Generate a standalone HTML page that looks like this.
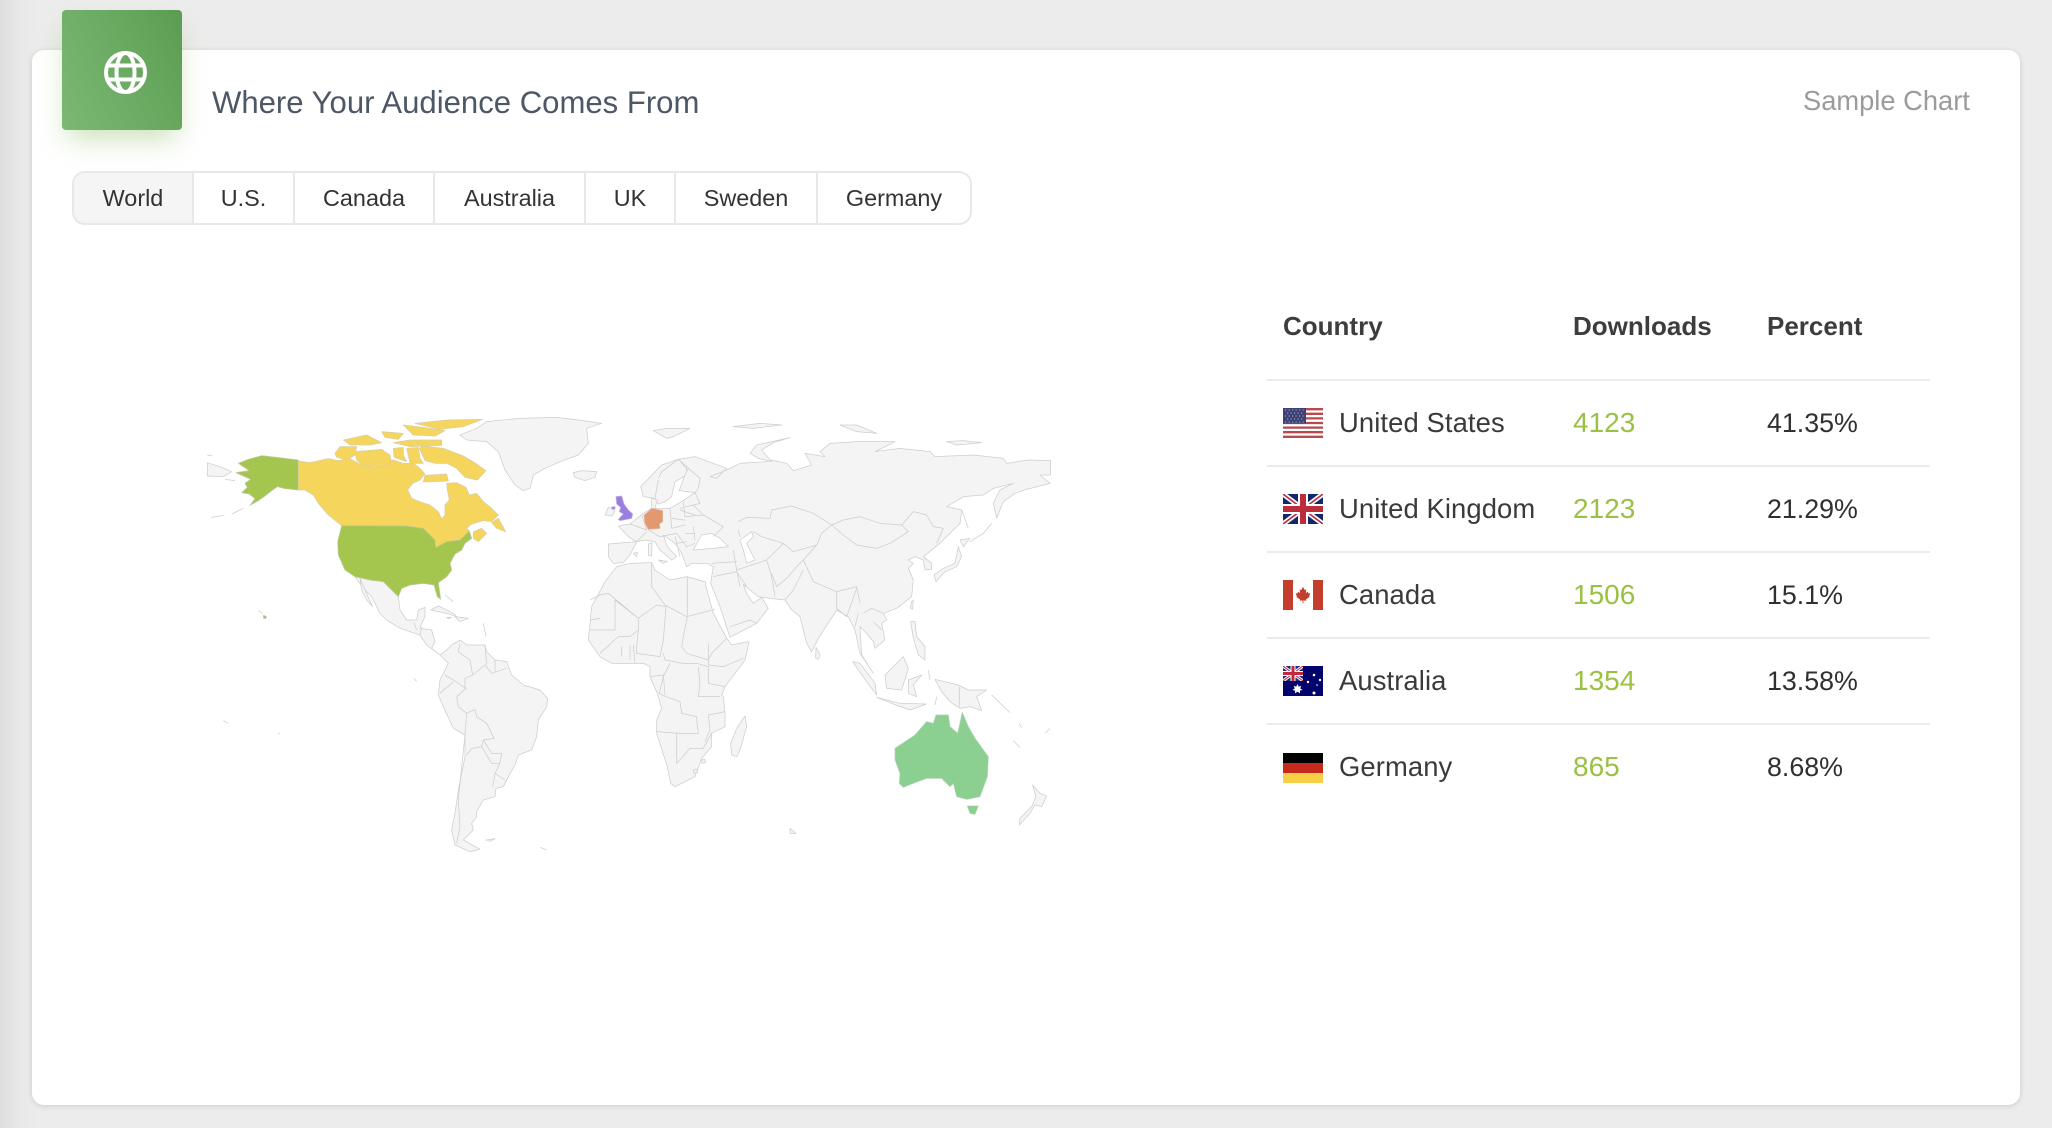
<!DOCTYPE html>
<html lang="en"><head><meta charset="utf-8"><title>Where Your Audience Comes From</title>
<style>
*{box-sizing:border-box}
html,body{margin:0;padding:0;width:2052px;height:1128px;overflow:hidden}
body{background:linear-gradient(90deg,#dedede 0,#e8e8e8 20px,#ececec 40px);font-family:"Liberation Sans",sans-serif;position:relative}
.card{position:absolute;left:32px;top:50px;width:1988px;height:1055px;background:#fff;border-radius:12px;box-shadow:0 1px 6px rgba(0,0,0,.14)}
.badge{position:absolute;left:62px;top:10px;width:120px;height:120px;border-radius:4px;background:linear-gradient(65deg,#7cba74,#5c9c52);box-shadow:0 14px 26px -6px rgba(130,180,80,.42)}
.t{position:absolute;white-space:nowrap;line-height:1}
.btns{position:absolute;left:72px;top:171px;width:900px;height:54px;border:2px solid #e8e8e8;border-radius:13px;overflow:hidden;background:#fff}
.b{position:absolute;top:0;height:50px;border-right:2px solid #e8e8e8;text-align:center;font-size:23.4px;line-height:50px;color:#333}
.line{position:absolute;left:1267px;width:663px;height:2px;background:#ebebeb}
.h{font-size:26px;font-weight:bold;color:#3d3d3d;top:313px}
.r{font-size:27.4px;color:#3a3a3a;letter-spacing:.1px}
.n{font-size:28px;color:#9ac144;left:1573px}
.p{font-size:26.8px;color:#303030;left:1767px}
.f{position:absolute;left:1283px;width:40px;height:30px;display:block}
svg.map{position:absolute;left:0;top:0}
svg.map path{stroke:#cdcdcd;stroke-width:2.2;stroke-linejoin:round;fill:#f4f4f4}
svg.map path.l{fill:none}
svg.map path.w{fill:#fff}
svg.map path.us{fill:#a5c64e;stroke:#bcc9a0}
svg.map path.ca{fill:#f6d55c;stroke:#d6cfa8}
svg.map path.au{fill:#8bcf91;stroke:#b3d3b6}
svg.map path.de{fill:#e3996f;stroke:#dcb9a4}
svg.map path.uk{fill:#9a7ee0;stroke:#bcb0dc}
</style></head><body>
<div class="card"></div>
<div class="badge"></div>
<svg style="position:absolute;left:102px;top:49px" width="47" height="47" viewBox="0 0 47 47" fill="none" stroke="#fff" stroke-width="4">
<circle cx="23.5" cy="23.5" r="19.5"/><ellipse cx="23.5" cy="23.5" rx="9" ry="19.5"/><path d="M6 16.5H41M6 30.5H41"/></svg>
<div class="t" style="left:212px;top:87px;font-size:31.1px;color:#4d5766">Where Your Audience Comes From</div>
<div class="t" style="left:1803px;top:87px;font-size:27.3px;color:#9b9b9b">Sample Chart</div>

<div class="btns">
<div class="b" style="left:0;width:120px;background:#f5f5f5">World</div>
<div class="b" style="left:120px;width:101px">U.S.</div>
<div class="b" style="left:221px;width:140px">Canada</div>
<div class="b" style="left:361px;width:151px">Australia</div>
<div class="b" style="left:512px;width:90px">UK</div>
<div class="b" style="left:602px;width:142px">Sweden</div>
<div class="b" style="left:744px;width:152px;border-right:0">Germany</div>
</div>

<svg class="map" width="2052" height="1128" viewBox="0 0 2052 1128">
<!-- North America, Greenland -->
<g transform="translate(190 400) scale(.33333)">
<path d="M810,105 L860,85 L890,65 L990,55 L1100,52 L1165,60 L1235,70 L1190,85 L1195,130 L1165,165 L1110,185 L1065,205 L1030,225 L1020,265 L1000,272 L975,255 L945,210 L925,155 L890,125 L830,120 Z"/>
<path d="M1150,218 L1175,212 L1220,215 L1215,232 L1185,242 L1155,232 Z"/>
<path d="M52,188 L90,200 L125,215 L100,230 L52,228 Z"/>
<path class="l" d="M65,352 L100,346 M125,342 L160,325 M105,238 L135,242 M52,165 L68,168"/>
<path d="M495,530 L540,540 L580,545 L605,570 L625,590 L630,630 L650,660 L680,660 L685,630 L705,622 L705,650 L695,670 L690,685 L725,690 L735,725 L725,745 L750,765 L730,750 L710,735 L690,705 L660,695 L630,685 L590,660 L570,640 L545,590 L520,565 Z"/>
<path d="M510,535 L525,570 L548,620 L530,600 L515,570 Z"/>
<path d="M722,630 L745,618 L790,640 L800,650 L770,640 Z"/>
<path d="M795,650 L835,655 L810,665 Z"/>
<path d="M770,652 L785,652 L775,656 Z"/>
<path class="l" d="M672,668 L680,690 M695,682 L690,705 M765,585 L790,605 M880,670 L888,710"/>
<path class="us" d="M145,190 L175,178 L215,167 L260,172 L325,180 L325,270 L285,266 L262,260 L245,272 L225,288 L205,302 L180,316 L195,296 L178,282 L155,278 L172,262 L165,250 L182,238 L160,228 L138,218 L178,212 L160,200 Z"/>
<path class="ca" d="M325,183 L360,188 L415,176 L445,182 L480,176 L515,195 L555,205 L580,185 L610,180 L640,190 L670,190 L690,205 L705,222 L690,240 L668,250 L653,270 L665,295 L690,305 L720,315 L745,335 L755,357 L765,345 L765,315 L778,300 L772,270 L770,250 L800,248 L828,262 L838,285 L860,280 L880,305 L905,325 L925,345 L905,365 L880,362 L845,372 L830,385 L838,393 L810,420 L770,425 L737,443 L735,420 L700,385 L650,378 L455,377 L440,365 L415,345 L385,310 L370,285 L345,270 L325,270 Z"/>
<path class="ca" d="M850,395 L875,385 L890,400 L865,425 L850,415 Z"/>
<path class="ca" d="M905,368 L925,355 L947,395 L920,385 Z"/>
<path class="ca" d="M688,145 L700,138 L760,145 L820,168 L860,192 L888,212 L862,240 L825,232 L800,205 L770,190 L735,190 L705,182 Z"/>
<path class="ca" d="M705,226 L770,222 L775,243 L700,246 Z"/>
<path class="ca" d="M495,155 L575,148 L600,165 L605,190 L570,203 L520,198 L500,180 Z"/>
<path class="ca" d="M435,160 L450,140 L500,140 L495,165 L470,180 L440,172 Z"/>
<path class="ca" d="M460,120 L530,105 L575,128 L540,135 L480,135 Z"/>
<path class="ca" d="M575,95 L640,100 L625,118 L585,112 Z"/>
<path class="ca" d="M610,128 L660,120 L755,120 L755,136 L660,140 Z"/>
<path class="ca" d="M640,75 L700,82 L765,92 L735,108 L670,105 Z"/>
<path class="ca" d="M675,70 L770,60 L878,58 L820,80 L750,88 Z"/>
<path class="ca" d="M610,145 L640,142 L640,165 L650,185 L612,172 Z"/>
<path class="ca" d="M650,145 L685,142 L690,175 L700,190 L660,190 Z"/>
<path class="us" d="M455,377 L650,378 L700,385 L735,420 L737,443 L770,425 L810,420 L838,393 L845,415 L825,430 L815,450 L795,462 L780,490 L785,510 L770,530 L745,548 L752,598 L742,590 L732,555 L700,550 L660,555 L635,565 L625,590 L605,570 L580,545 L540,540 L495,530 L465,510 L445,465 L443,425 Z"/>
<path class="us" d="M220,646 L229,649 L227,656 L221,655 Z"/>
<path class="l" d="M205,632 L218,640"/>
</g>
<!-- South America -->
<g transform="translate(190 600) scale(.33333)">
<path d="M750,165 L770,150 L785,135 L810,120 L830,135 L885,135 L890,155 L915,180 L950,185 L965,225 L1000,255 L1050,270 L1073,295 L1070,320 L1045,360 L1040,410 L1025,450 L985,465 L975,495 L955,530 L940,560 L918,565 L915,590 L880,600 L860,635 L860,650 L845,670 L850,690 L820,720 L870,748 L840,755 L795,735 L785,690 L795,640 L805,570 L825,470 L825,405 L790,385 L760,320 L745,285 L750,240 L765,210 L775,190 Z"/>
<path class="l" d="M810,130 L805,155 L840,180 L848,225 L885,195 L905,220 L950,205 M885,135 L890,195 M915,180 L915,215 M765,225 L790,240 L820,260 L828,265 L800,290 L805,320 L830,340 L825,405 M750,280 L790,245 M830,340 L855,328 L860,350 L890,370 L912,415 L880,420 L875,440 L845,445 L830,465 M880,420 L905,460 L935,460 L930,490 L905,490 L875,440 M930,490 L915,520 L945,540 M915,520 L908,560 M825,405 L815,500 L805,600 L810,680 L800,730 M848,225 L825,235 L825,265"/>
<path d="M888,720 L915,716 L900,724 Z"/>
<path class="l" d="M1050,742 L1070,750 M100,362 L115,370 M672,235 L680,245 M265,400 L270,401"/>
</g>
<!-- Eurasia, Africa, Oceania -->
<g transform="translate(580 400) scale(.33333)">
<path d="M110,500 L150,490 L215,488 L225,510 L270,540 L320,530 L375,545 L378,560 L400,640 L440,715 L455,735 L507,725 L495,780 L435,860 L425,885 L430,890 L435,935 L435,980 L395,1000 L395,1040 L365,1075 L345,1130 L285,1160 L272,1150 L262,1100 L230,1000 L230,960 L245,925 L232,880 L210,830 L210,800 L190,790 L130,790 L95,790 L60,770 L25,720 L35,620 L75,545 Z"/>
<path class="l" d="M30,690 L105,690 L105,600 L175,655 L230,615 L258,620 M85,580 L175,655 L175,690 L150,710 L115,710 M215,490 L215,560 L255,615 L320,650 L405,628 M322,530 L322,650 M322,650 L310,710 L305,740 L320,760 L385,780 L395,760 L440,715 M175,690 L170,740 L170,760 L240,770 L250,720 L258,620 M250,760 L255,780 L310,790 L350,790 L385,800 M385,730 L385,795 L430,800 L490,775 M270,790 L250,830 L238,880 L258,890 L300,905 L305,940 L350,950 L350,960 L355,1000 L300,1000 L230,995 M355,800 L360,850 L355,890 L420,890 M385,800 L385,850 L435,860 M435,935 L385,945 L390,990 L375,1025 M290,1000 L290,1090 L330,1045 L370,1045 L395,1000 M60,760 L115,710 M125,770 L125,740 M150,735 L150,780 M160,735 L165,790 M30,660 L60,655 M30,600 L60,585 L85,580 M210,830 L250,825 L255,885"/>
<path d="M495,948 L500,980 L480,1050 L470,1070 L455,1065 L452,1030 L470,985 Z"/>
<path d="M340,1110 L352,1108 L352,1118 L342,1120 Z"/>
<path d="M365,1080 L375,1078 L376,1088 L366,1090 Z"/>
<!-- Iberia -->
<path d="M85,432 L135,428 L170,425 L150,465 L130,488 L100,490 L85,470 Z"/>
<!-- Scandinavia -->
<path d="M182,260 L245,195 L295,178 L320,205 L320,225 L285,245 L275,290 L255,305 L235,312 L225,295 L190,290 Z"/>
<path class="l" d="M235,235 L245,215 L295,178 M225,295 L235,240"/>
<path d="M215,295 L232,300 L225,325 L215,325 Z"/>
<!-- Main Eurasia -->
<path d="M115,378 L150,372 L190,340 L215,325 L270,325 L300,308 L345,278 L298,272 L315,225 L325,205 L295,178 L345,170 L400,190 L440,205 L410,235 L390,230 L440,210 L480,190 L560,185 L575,180 L620,190 L640,212 L695,195 L675,160 L735,170 L720,155 L750,130 L830,125 L945,125 L885,155 L960,145 L1050,155 L1065,170 L1180,165 L1270,175 L1280,190 L1345,180 L1412,182 L1412,225 L1380,225 L1410,250 L1340,268 L1305,280 L1270,305 L1250,355 L1240,310 L1260,270 L1300,250 L1240,265 L1210,285 L1150,290 L1100,320 L1145,330 L1140,370 L1085,425 L1030,470 L1055,490 L1055,508 L1035,510 L1030,480 L1005,470 L985,480 L1000,490 L985,505 L1000,540 L995,590 L950,625 L910,640 L920,660 L905,670 L915,720 L885,745 L880,725 L860,700 L840,680 L845,765 L880,820 L840,760 L825,690 L805,650 L770,630 L715,715 L695,755 L680,730 L660,650 L635,630 L615,600 L570,595 L535,590 L510,570 L490,553 L500,580 L520,610 L545,592 L565,625 L530,670 L450,712 L420,620 L392,550 L395,530 L400,500 L380,490 L335,490 L320,500 L305,460 L285,430 L250,405 L262,440 L290,470 L275,480 L240,450 L225,425 L195,420 L170,425 L145,410 Z"/>
<path class="w" d="M345,440 L365,405 L395,400 L420,415 L445,440 L400,445 L340,450 Z"/>
<path class="w" d="M480,420 L515,395 L520,410 L500,430 L525,480 L500,490 L490,450 Z"/>
<path class="l" d="M475,365 L500,352 L570,355 L575,330 L635,318 L700,340 L755,375 M475,390 L480,410 M520,395 L545,410 L610,430 L640,455 L710,435 L725,400 L755,375 L790,360 L840,350 L900,370 L965,375 L1000,335 L1040,345 L1060,380 L1090,385 L1070,430 M755,375 L790,405 L830,435 L890,445 L930,430 L985,395 L965,375 M710,435 L670,480 L700,545 L770,575 L830,560 L840,610 M460,450 L470,510 L560,480 L575,530 L585,590 M575,520 L590,560 L620,535 L650,500 L670,480 M615,600 L640,570 L670,510 M400,530 L470,515 L500,560 M395,490 L470,485 M450,680 L510,660 L530,670 M770,575 L770,625 L800,650 L830,565 M835,640 L825,680 M850,640 L875,625 L910,640 M880,665 L905,690 M185,345 L200,390 L150,372 M270,325 L275,385 M310,305 L315,350 L370,345 L430,380 L400,410 M340,315 L370,345 M275,385 L315,375 M205,390 L240,410 L290,400 L320,440 L345,430 M340,380 L345,420 M285,410 L300,470 M325,205 L360,235 L355,265 L345,278 M345,278 L360,310 L340,315 L300,325 M1030,470 L1040,480 M560,480 L610,430 M470,510 L480,560 M300,330 L345,345 M275,355 L315,360 M315,400 L345,400 M290,430 L320,425 M170,425 L200,395"/>
<!-- Germany, UK -->
<path class="de" d="M192,345 L205,335 L215,325 L248,332 L248,365 L238,372 L240,385 L205,388 L195,370 Z"/>
<path class="uk" d="M108,290 L125,288 L132,312 L145,330 L158,342 L155,355 L120,362 L115,358 L130,342 L118,335 L122,322 L110,312 Z"/>
<path d="M75,345 L85,322 L100,328 L105,335 L95,348 Z"/>
<path class="uk" d="M95,321 L105,320 L105,328 L96,327 Z"/>
<!-- Med islands -->
<path d="M205,432 L216,428 L215,468 L206,466 Z"/>
<path d="M160,460 L172,457 L170,470 Z"/>
<path d="M235,480 L262,484 L250,490 Z"/>
<!-- Arctic -->
<path d="M220,92 L260,85 L330,85 L280,110 L260,115 Z"/>
<path d="M460,80 L540,70 L605,75 L520,85 Z"/>
<path d="M510,160 L530,135 L630,113 L580,128 L545,150 L575,185 L535,175 Z"/>
<path d="M780,75 L830,75 L890,100 L830,95 Z"/>
<path d="M1100,125 L1150,122 L1205,128 L1130,135 Z"/>
<!-- Japan etc -->
<path d="M1062,525 L1090,505 L1125,490 L1135,440 L1145,470 L1130,500 L1095,515 L1068,545 Z"/>
<path d="M1140,420 L1170,415 L1150,440 Z"/>
<path class="l" d="M1145,330 L1165,385 M1235,370 L1210,400 L1170,425"/>
<path d="M995,605 L1000,600 L998,628 L991,625 Z"/>
<path d="M708,742 L720,765 L715,778 L707,775 Z"/>
<!-- SE Asia -->
<path d="M992,665 L1005,665 L1010,710 L1035,740 L1035,780 L1015,765 L1000,715 Z"/>
<path d="M915,825 L970,770 L985,805 L965,870 L920,865 Z"/>
<path d="M818,785 L840,790 L885,850 L890,885 L860,845 Z"/>
<path d="M890,892 L960,910 L1040,912 L990,930 L940,912 Z"/>
<path d="M985,840 L1025,825 L1000,855 L1010,890 L985,880 Z"/>
<path d="M1065,838 L1135,855 L1165,870 L1220,870 L1190,890 L1205,932 L1170,920 L1140,925 L1110,905 L1085,875 Z"/>
<path class="l" d="M1138,860 L1138,920 M1235,885 L1290,938 M1318,970 L1325,985 M1300,1022 L1320,1042 M1395,1000 L1410,985 M1045,810 L1050,840 M1070,890 L1065,915"/>
<!-- Australia -->
<path class="au" d="M945,1045 L1005,1005 L1040,965 L1060,970 L1068,945 L1105,945 L1110,980 L1133,1000 L1147,937 L1165,980 L1185,1015 L1225,1070 L1222,1130 L1200,1190 L1160,1198 L1130,1190 L1120,1150 L1110,1160 L1085,1135 L1040,1135 L1000,1150 L970,1162 L958,1150 L960,1120 L945,1080 Z"/>
<path class="au" d="M1162,1218 L1195,1218 L1185,1243 L1170,1240 Z"/>
<path d="M1358,1155 L1380,1180 L1400,1188 L1385,1220 L1365,1215 L1350,1240 L1318,1275 L1320,1255 L1355,1220 L1368,1190 Z"/>
<path d="M630,1285 L648,1300 L630,1300 Z"/>
</g>
</svg>

<div class="t h" style="left:1283px">Country</div>
<div class="t h" style="left:1573px">Downloads</div>
<div class="t h" style="left:1767px">Percent</div>
<div class="line" style="top:379px"></div>
<div class="line" style="top:465px"></div>
<div class="line" style="top:551px"></div>
<div class="line" style="top:637px"></div>
<div class="line" style="top:723px"></div>

<svg class="f" style="top:408px" viewBox="0 0 40 30">
<rect width="40" height="30" fill="#fff"/>
<path d="M0 1.2H40M0 5.8H40M0 10.4H40M0 15H40M0 19.6H40M0 24.2H40M0 28.8H40" stroke="#b64a4e" stroke-width="2.3"/>
<rect width="23" height="15.5" fill="#3d4176"/>
<path d="M2 2H21M4 5H21M2 8H21M4 11H21M2 14H21" stroke="#aab" stroke-width="1.1" stroke-dasharray="1.2 2.3"/>
</svg>
<svg class="f" style="top:494px" viewBox="0 0 40 30">
<rect width="40" height="30" fill="#12286b"/>
<path d="M0 0L40 30M40 0L0 30" stroke="#fff" stroke-width="5"/>
<path d="M0 0L40 30M40 0L0 30" stroke="#c0283c" stroke-width="1.6"/>
<path d="M20 0V30M0 15H40" stroke="#fff" stroke-width="10"/>
<path d="M20 0V30M0 15H40" stroke="#bd2c3c" stroke-width="6"/>
</svg>
<svg class="f" style="top:580px" viewBox="0 0 40 30">
<rect width="40" height="30" fill="#fff"/>
<rect width="10" height="30" fill="#c33e2c"/><rect x="30" width="10" height="30" fill="#c33e2c"/>
<path transform="translate(20 15) scale(.82) translate(-20 -15)" d="M20 5L22 9L24 8L23.5 12.5L26 11L26.7 13L29 13L27.5 16.5L28 17.5L23.5 20.5L24 22L20.5 21.5V25H19.5V21.5L16 22L16.5 20.5L12 17.5L12.5 16.5L11 13L13.3 13L14 11L16.5 12.5L16 8L18 9Z" fill="#c33e2c"/>
</svg>
<svg class="f" style="top:666px" viewBox="0 0 40 30">
<rect width="40" height="30" fill="#03036e"/>
<svg x="0" y="0" width="20" height="15" viewBox="0 0 40 30">
<rect width="40" height="30" fill="#1f2a80"/>
<path d="M0 0L40 30M40 0L0 30" stroke="#fff" stroke-width="6"/>
<path d="M0 0L40 30M40 0L0 30" stroke="#c0283c" stroke-width="2"/>
<path d="M20 0V30M0 15H40" stroke="#fff" stroke-width="10"/>
<path d="M20 0V30M0 15H40" stroke="#c0283c" stroke-width="6"/>
</svg>
<g fill="#fff"><path d="M14.5 18L15.7 20.6L18.3 20L17.2 22.4L19.5 24L16.9 24.6L17 27.4L14.5 25.6L12 27.4L12.1 24.6L9.5 24L11.8 22.4L10.7 20L13.3 20.6Z"/><circle cx="31" cy="9" r="1.3"/><circle cx="31" cy="27" r="1.5"/><circle cx="25" cy="16" r="1.2"/><circle cx="37" cy="14" r="1.2"/><circle cx="34" cy="19" r=".8"/></g>
</svg>
<svg class="f" style="top:753px" viewBox="0 0 40 30">
<rect width="40" height="10" fill="#000"/><rect y="10" width="40" height="10" fill="#c5291b"/><rect y="20" width="40" height="10" fill="#f7cf46"/>
</svg>

<div class="t r" style="left:1339px;top:409px">United States</div>
<div class="t r" style="left:1339px;top:495px">United Kingdom</div>
<div class="t r" style="left:1339px;top:581px">Canada</div>
<div class="t r" style="left:1339px;top:667px">Australia</div>
<div class="t r" style="left:1339px;top:753px">Germany</div>

<div class="t n" style="top:409px">4123</div>
<div class="t n" style="top:495px">2123</div>
<div class="t n" style="top:581px">1506</div>
<div class="t n" style="top:667px">1354</div>
<div class="t n" style="top:753px">865</div>

<div class="t p" style="top:410px">41.35%</div>
<div class="t p" style="top:496px">21.29%</div>
<div class="t p" style="top:582px">15.1%</div>
<div class="t p" style="top:668px">13.58%</div>
<div class="t p" style="top:754px">8.68%</div>
</body></html>
